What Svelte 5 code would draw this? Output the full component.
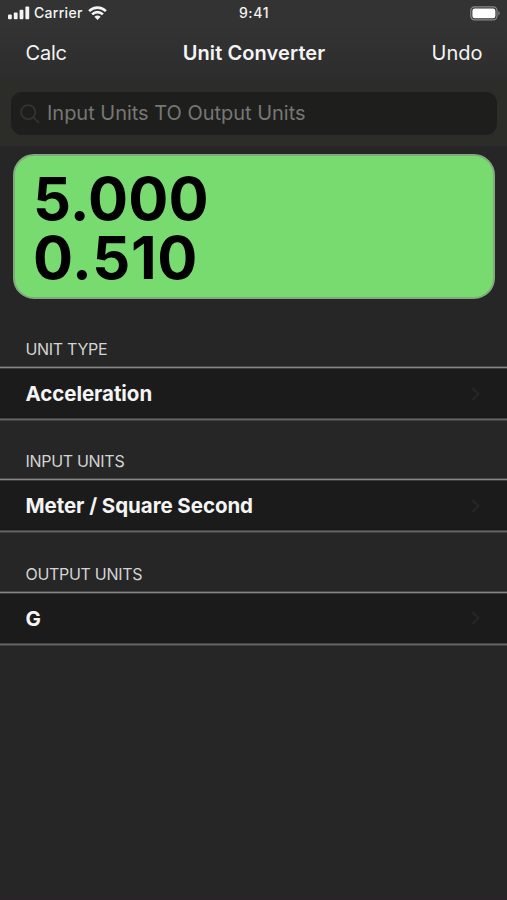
<script>
  const sections = [
    { label: 'UNIT TYPE', value: 'Acceleration' },
    { label: 'INPUT UNITS', value: 'Meter / Square Second' },
    { label: 'OUTPUT UNITS', value: 'G' }
  ];
</script>

<div class="screen">
  <div class="status">
    <div class="side">
      <svg class="signal" width="22" height="14" viewBox="0 0 22 14" fill="#f4f4f4">
        <rect x="0" y="8.6" width="3.8" height="4.7" rx="1" />
        <rect x="5.8" y="6.5" width="3.8" height="6.8" rx="1" />
        <rect x="11.6" y="3.7" width="3.8" height="9.6" rx="1" />
        <rect x="17.4" y="0.4" width="3.8" height="12.9" rx="1" />
      </svg>
      <span class="carrier">Carrier</span>
      <svg class="wifi" width="19" height="14" viewBox="0 0 19 14" fill="none" stroke="#f4f4f4" stroke-width="2.6">
        <path d="M1.1 5.1C5.8 .5 13.2 .5 17.9 5.1" />
        <path d="M4.1 8.4C7.2 5.4 11.8 5.4 14.9 8.4" />
        <path d="M6.4 10.8C8.2 9.1 10.8 9.1 12.6 10.8L9.5 13.9Z" fill="#f4f4f4" stroke="none" />
      </svg>
    </div>
    <span class="time">9:41</span>
    <div class="side end">
      <svg width="31" height="15" viewBox="0 0 31 15">
        <rect x=".8" y=".8" width="26.2" height="13" rx="3.7" fill="none" stroke="#8a8a8a" stroke-width="1.2" />
        <rect x="2.4" y="2.4" width="23" height="9.8" rx="2.3" fill="#fff" />
        <path d="M28.4 5.2C30.2 5.8 30.2 8.8 28.4 9.4Z" fill="#8a8a8a" />
      </svg>
    </div>
  </div>

  <header>
    <span class="action">Calc</span>
    <h1>Unit Converter</h1>
    <span class="action right">Undo</span>
  </header>

  <div class="search-area">
    <div class="search">
      <svg width="20" height="20" viewBox="0 0 20 20" fill="none" stroke="#343432" stroke-width="1.8" stroke-linecap="round">
        <circle cx="8.2" cy="8.2" r="7.1" />
        <path d="M13.4 13.4L18.6 18.4" />
      </svg>
      <span>Input Units TO Output Units</span>
    </div>
  </div>

  <div class="display">
    <div class="in">5.000</div>
    <div class="out">0.510</div>
  </div>

  <main>
    {#each sections as s}
      <section>
        <h2>{s.label}</h2>
        <div class="row">
          <span>{s.value}</span>
          <svg width="10" height="14" viewBox="0 0 10 14" fill="none" stroke="#272727" stroke-width="2">
            <path d="M1.5 1L7.5 7L1.5 13" />
          </svg>
        </div>
      </section>
    {/each}
  </main>
</div>

<style>
  :global(body) {
    margin: 0;
    background: #262626;
  }
  .screen {
    box-sizing: border-box;
    height: 900px;
    overflow: hidden;
    background: #262626;
    border-bottom: 1px solid #2b2228;
    color: #f4f4f4;
    font-family: Inter, 'Liberation Sans', sans-serif;
    white-space: nowrap;
  }
  .status {
    display: flex;
    align-items: center;
    height: 26px;
    padding: 0 6px 0 8px;
    background: #333;
    font-size: 14px;
    line-height: 16px;
  }
  .side {
    display: flex;
    flex: 1;
    align-items: center;
  }
  .end {
    justify-content: flex-end;
  }
  .carrier {
    margin-left: 4px;
    width: 49px;
    font-weight: 500;
    letter-spacing: 0.3px;
  }
  .wifi {
    margin-left: 5px;
  }
  .time {
    font-weight: 500;
    letter-spacing: 0.6px;
    margin-right: 1px;
  }
  header {
    display: flex;
    align-items: center;
    height: 52px;
    padding: 0 24.5px 0 25.5px;
    background: linear-gradient(#333, #2d2d2d);
    font-size: 20px;
  }
  .action {
    flex: 1;
    padding-top: 1px;
    letter-spacing: -0.2px;
  }
  .right {
    text-align: right;
    letter-spacing: 0;
  }
  h1 {
    margin: 0;
    padding-top: 1px;
    font-size: 20px;
    font-weight: 600;
    letter-spacing: 0.1px;
  }
  .search-area {
    box-sizing: border-box;
    height: 68px;
    padding: 14px 10px 0 11px;
    background: #2c2c28;
  }
  .search {
    display: flex;
    align-items: center;
    gap: 7px;
    height: 43px;
    padding-left: 9px;
    border-radius: 11px;
    background: #1e1e1c;
    color: #777775;
    font-size: 20px;
  }
  .search span {
    padding-bottom: 2px;
    letter-spacing: -0.02px;
  }
  .display {
    box-sizing: border-box;
    height: 145px;
    margin: 8px 12px 0 13px;
    padding: 13px 0 0 18px;
    border: 2px solid #82a87e;
    border-radius: 21px;
    background: #77db70;
    color: #000;
    font-size: 59.5px;
    font-weight: 700;
    line-height: 58.5px;
  }
  .in {
    letter-spacing: 0.1px;
  }
  .out {
    letter-spacing: 0.7px;
  }
  main {
    padding-top: 27px;
  }
  section {
    height: 112.4px;
  }
  h2 {
    margin: 0;
    padding-left: 25.5px;
    height: 40px;
    line-height: 46px;
    font-size: 16px;
    font-weight: 400;
    color: #d4d4d4;
    letter-spacing: -0.3px;
  }
  .row {
    box-sizing: border-box;
    display: flex;
    align-items: center;
    justify-content: space-between;
    height: 55px;
    padding: 0 26px 0 25.5px;
    background:
      linear-gradient(#4a4a4a 1px, #868686 1px 2px, #3c3c3c 2px) top / 100% 3px no-repeat,
      linear-gradient(#444 1px, #666 1px 2px, #404040 2px) bottom / 100% 3px no-repeat,
      #1b1b1b;
    font-size: 20.5px;
    font-weight: 650;
    letter-spacing: -0.06px;
  }
</style>
